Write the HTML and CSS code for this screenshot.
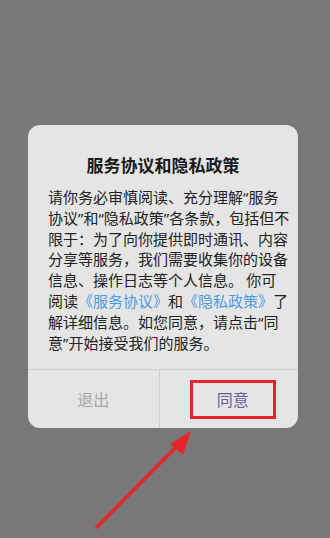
FILE: index.html
```html
<!DOCTYPE html>
<html lang="zh-CN">
<head>
  <meta charset="UTF-8">
  <meta name="viewport" content="width=device-width, initial-scale=1.0">
  <title>服务协议和隐私政策</title>
  <link rel="stylesheet" href="styles.css">
</head>
<body>

  <div class="screen">
    <div class="dialog">
      <h2 class="dialog-title">服务协议和隐私政策</h2>
      <p class="dialog-text">请你务必审慎阅读、充分理解<span class="q">“</span>服务<br>协议<span class="q">”</span>和<span class="q">“</span>隐私政策<span class="q">”</span>各条款，包括但不<br>限于：为了向你提供即时通讯、内容<br>分享等服务，我们需要收集你的设备<br>信息、操作日志等个人信息。 你可<br>阅读<a class="link">《服务协议》</a>和<a class="link">《隐私政策》</a>了<br>解详细信息。如您同意，请点击<span class="q">“</span>同<br>意<span class="q">”</span>开始接受我们的服务。</p>
      <div class="dialog-buttons">
        <button class="btn btn-exit" type="button">退出</button>
        <button class="btn btn-agree" type="button"><span class="mark">同意</span></button>
      </div>
    </div>

    <!-- red arrow pointing at the agree button -->
    <svg class="arrow" width="330" height="538" viewBox="0 0 330 538">
      <line x1="97" y1="527" x2="180" y2="443" stroke="#e8242b" stroke-width="3.5" stroke-linecap="round"/>
      <polygon points="191,431 170,444 183,455" fill="#e8242b"/>
    </svg>
  </div>

</body>
</html>
```

FILE: styles.css
```css
body {
  margin: 0;
  padding: 0;
  background-color: #787878;
  font-family: "Noto Sans CJK SC", "Noto Sans", sans-serif;
}

.screen {
  position: relative;
  width: 330px;
  height: 538px;
  overflow: hidden;
  padding-top: 125px;
  box-sizing: border-box;
}

.dialog {
  width: 270px;
  margin-left: 28px;
  background-color: #e5e5e5;
  border-radius: 12px;
  overflow: hidden;
}

.dialog-title {
  margin: 0;
  padding-top: 28px;
  font-size: 17px;
  line-height: 24px;
  font-weight: bold;
  text-align: center;
  color: #1a1a1a;
}

.dialog-text {
  margin: 0;
  padding: 10px 10px 16px 20px;
  font-size: 15px;
  line-height: 20.8px;
  color: #222;
  white-space: nowrap;
}

/* narrow curly quotes, like the phone font */
.q {
  font-family: "Noto Sans", sans-serif;
}

.link {
  color: #4b9be3;
}

.dialog-buttons {
  display: flex;
  height: 58px;
  border-top: 1px solid #cfcfcf;
}

.btn {
  flex: 1;
  border: none;
  background: none;
  font-family: inherit;
  font-size: 16px;
  padding: 0;
  display: flex;
  align-items: center;
  justify-content: center;
}

.btn-exit {
  color: #a8a8a8;
  border-right: 1px solid #cfcfcf;
}

.btn-agree {
  color: #6b5ba3;
  padding-left: 8px;
}

.mark {
  display: flex;
  align-items: center;
  justify-content: center;
  width: 80px;
  height: 33px;
  border: 3px solid #e8242b;
}

.arrow {
  position: absolute;
  left: 0;
  top: 0;
}
```
